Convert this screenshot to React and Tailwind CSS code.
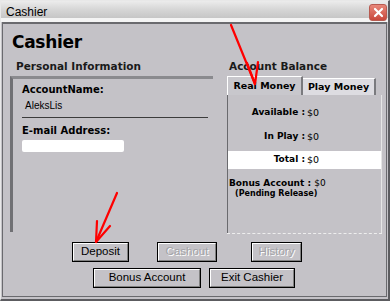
import React from 'react';

const label = { fontFamily: '"DejaVu Sans", Verdana, sans-serif' };
const btnFont = { fontFamily: '"Liberation Sans", Arial, sans-serif' };

function WinButton({ children, width, disabled }) {
  return (
    <div className={`${width} h-[20px] border border-black bg-[#c4c2c7]`}>
      <div className="h-full w-full border-t border-l border-t-white border-l-white border-b border-r border-b-[#808080] border-r-[#808080] flex items-center justify-center">
        <span
          className={`text-[11.5px] leading-none ${disabled ? 'text-[#a3a2a6] [text-shadow:1px_1px_0_#ffffff]' : 'text-black'}`}
          style={btnFont}
        >
          {children}
        </span>
      </div>
    </div>
  );
}

function BalanceRow({ name, value, white }) {
  return (
    <div className={`flex h-[18px] items-center ${white ? 'bg-white' : ''}`}>
      <div className="w-[77px] text-right text-[9px] font-bold text-black" style={label}>{name} :</div>
      <div className="pl-[2px] text-[9.5px] text-black" style={label}>{value}</div>
    </div>
  );
}

export default function App() {
  return (
    <div className="relative w-[390px] h-[301px] overflow-hidden bg-white">
      <div className="w-full h-full border-r-2 border-b-2 border-r-[#5c5c60] border-b-[#5c5c60] border-l border-t border-l-[#e8e8e8] border-t-[#e8e8e8] bg-[#c4c2c7] flex flex-col">
        {/* Title bar */}
        <div className="h-[21px] flex items-center justify-between pl-[5px] pr-[1px] bg-gradient-to-b from-[#ececec] via-[#d6d6d6] to-[#c6c6c6] border-b-4 border-b-[#f4f4f4]">
          <span className="text-[12px] text-black pt-[5px]" style={btnFont}>Cashier</span>
          <div className="mt-[5px] w-[18px] h-[17px] rounded-[3px] bg-gradient-to-b from-[#e8877a] to-[#c9473b] border border-[#b85a50] flex items-center justify-center">
            <svg width="11" height="11" viewBox="0 0 11 11">
              <path d="M2 2 L9 9 M9 2 L2 9" stroke="white" strokeWidth="2.2" strokeLinecap="round" />
            </svg>
          </div>
        </div>

        {/* Body */}
        <div className="flex-1 mx-[1px] mb-[2px] border border-[#6a6a6e] border-t-2 flex flex-col">
          <div className="pl-[9px] pt-[10px] h-[36px] text-[17px] font-bold tracking-[-0.3px] text-black leading-none" style={label}>Cashier</div>

          <div className="flex h-[174px]">
            {/* Personal info */}
            <div className="w-[210px] pl-[7px] flex flex-col">
              <div className="pl-[6px] h-[16px] text-[10.5px] font-bold text-[#1a1a1a] leading-none pt-[1px]" style={label}>Personal Information</div>
              <div className="flex-1 border-l-[3px] border-t-[3px] border-l-[#707074] border-t-[#8a8a8e] pl-[9px] pr-[2px] pt-[6px] mb-[2px]">
                <div className="text-[10px] font-bold text-black leading-none" style={label}>AccountName:</div>
                <div className="pl-[3px] pt-[6px] text-[10px] text-black leading-none" style={btnFont}>AleksLis</div>
                <div className="mt-[6px] h-[1px] bg-[#3c3c3c] w-[186px]"></div>
                <div className="pt-[8px] text-[10px] font-bold text-black leading-none" style={label}>E-mail Address:</div>
                <div className="mt-[4px] w-[102px] h-[12px] bg-white rounded-[2px] blur-[0.6px]"></div>
              </div>
            </div>

            {/* Account balance */}
            <div className="ml-[14px] w-[155px] flex flex-col">
              <div className="pl-[2px] h-[16px] text-[10.5px] font-bold text-[#1a1a1a] leading-none pt-[1px]" style={label}>Account Balance</div>
              <div className="flex h-[19px] items-end">
                <div className="w-[76px] h-[19px] bg-[#c8c7cc] border-t border-l border-t-white border-l-white border-r-2 border-r-[#7a7a7e] flex items-center justify-center text-[9.5px] font-bold text-black" style={label}>Real Money</div>
                <div className="w-[73px] h-[17px] bg-[#dddce1] border-t border-t-white border-r-2 border-r-[#7a7a7e] flex items-center justify-center text-[9.5px] font-bold text-black" style={label}>Play Money</div>
              </div>
              <div className="flex-1 flex flex-col">
                <div className="flex-1 border-l border-l-[#6a6a6e] border-r border-r-[#e6e6e6] pt-[9px]">
                  <BalanceRow name="Available" value="$0" />
                  <div className="h-[6px]"></div>
                  <BalanceRow name="In Play" value="$0" />
                  <div className="h-[5px]"></div>
                  <BalanceRow name="Total" value="$0" white />
                  <div className="pt-[10px] pl-[1px] text-[9px] font-bold text-black leading-none" style={label}>
                    Bonus Account : <span className="font-normal">$0</span>
                  </div>
                  <div className="pl-[7px] pt-[2px] text-[8px] font-bold text-black leading-none" style={label}>(Pending Release)</div>
                </div>
                <div className="h-[1px] border-t border-dashed border-t-[#eeeeee]"></div>
              </div>
            </div>
          </div>

          {/* Buttons */}
          <div className="flex pt-[8px] pl-[69px]">
            <WinButton width="w-[57px]">Deposit</WinButton>
            <div className="ml-[28px]"><WinButton width="w-[60px]" disabled>Cashout</WinButton></div>
            <div className="ml-[34px]"><WinButton width="w-[51px]" disabled>History</WinButton></div>
          </div>
          <div className="flex pt-[6px] pl-[90px]">
            <WinButton width="w-[108px]">Bonus Account</WinButton>
            <div className="ml-[8px]"><WinButton width="w-[86px]">Exit Cashier</WinButton></div>
          </div>
        </div>
      </div>

      {/* Red annotation arrows */}
      <svg className="absolute left-0 top-0 pointer-events-none" width="390" height="301" viewBox="0 0 390 301">
        <g stroke="#ff0000" strokeWidth="2.2" strokeLinecap="round" fill="none">
          <path d="M231 25 L255 84" />
          <path d="M255 84 L247 63 M255 84 L258 62" />
          <path d="M117 193 L96 242" />
          <path d="M96 242 L97 221 M96 242 L110 226" />
        </g>
      </svg>
    </div>
  );
}
